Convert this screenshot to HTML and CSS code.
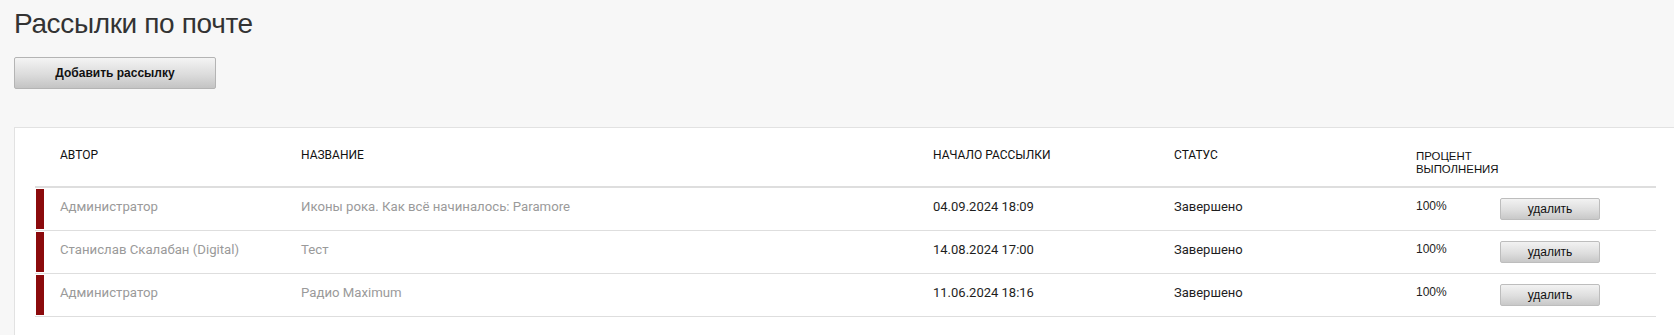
FILE: index.html
```html
<!DOCTYPE html>
<html lang="ru">
<head>
<meta charset="utf-8">
<title>Рассылки по почте</title>
<link rel="stylesheet" href="styles.css">
</head>
<body>
<div class="page">
  <h1 class="title">Рассылки по почте</h1>
  <button class="btn-add" type="button">Добавить рассылку</button>
  <div class="panel">
    <div class="table">
      <div class="thead">
        <div class="cell"></div>
        <div class="cell th">Автор</div>
        <div class="cell th">Название</div>
        <div class="cell th">Начало рассылки</div>
        <div class="cell th">Статус</div>
        <div class="cell th th-arial">Процент выполнения</div>
      </div>
      <div class="row">
        <div class="cell"><span class="bar"></span></div>
        <div class="cell muted">Администратор</div>
        <div class="cell muted">Иконы рока. Как всё начиналось: Paramore</div>
        <div class="cell dark">04.09.2024 18:09</div>
        <div class="cell dark">Завершено</div>
        <div class="cell pct">100%</div>
        <div class="cell"><button class="btn-del" type="button">удалить</button></div>
      </div>
      <div class="row">
        <div class="cell"><span class="bar"></span></div>
        <div class="cell muted">Станислав Скалабан (Digital)</div>
        <div class="cell muted">Тест</div>
        <div class="cell dark">14.08.2024 17:00</div>
        <div class="cell dark">Завершено</div>
        <div class="cell pct">100%</div>
        <div class="cell"><button class="btn-del" type="button">удалить</button></div>
      </div>
      <div class="row">
        <div class="cell"><span class="bar"></span></div>
        <div class="cell muted">Администратор</div>
        <div class="cell muted">Радио Maximum</div>
        <div class="cell dark">11.06.2024 18:16</div>
        <div class="cell dark">Завершено</div>
        <div class="cell pct">100%</div>
        <div class="cell"><button class="btn-del" type="button">удалить</button></div>
      </div>
    </div>
  </div>
</div>
</body>
</html>
```

FILE: styles.css
```css
html, body {
  margin: 0;
  padding: 0;
  background: #f7f7f7;
}

.page {
  padding-left: 14px;
  display: flex;
  flex-direction: column;
  align-items: flex-start;
}

.title {
  margin: 7px 0 0 0;
  font-family: "Liberation Sans", Arial, sans-serif;
  font-weight: normal;
  font-size: 28px;
  letter-spacing: -0.35px;
  line-height: 33px;
  color: #333;
}

.btn-add {
  margin-top: 17px;
  width: 202px;
  height: 32px;
  box-sizing: border-box;
  border: 1px solid #b4b4b4;
  border-radius: 2px;
  background: linear-gradient(to bottom, #f4f4f4 0%, #dcdcdc 55%, #c4c4c4 100%);
  font-family: "Liberation Sans", Arial, sans-serif;
  font-weight: bold;
  font-size: 12px;
  color: #111;
  padding: 0;
}

.panel {
  margin-top: 38px;
  align-self: stretch;
  background: #fff;
  border-top: 1px solid #e2e2e2;
  border-left: 1px solid #e2e2e2;
  padding: 0 18px 30px 20px;
}

.table {
  display: flex;
  flex-direction: column;
}

.thead,
.row {
  display: grid;
  grid-template-columns: 25px 241px 632px 241px 242px 84px 1fr;
  align-items: start;
}

.thead {
  height: 60px;
  box-sizing: border-box;
  padding-top: 20px;
  border-bottom: 2px solid #dedede;
}

.th {
  font-family: Roboto, "Liberation Sans", sans-serif;
  font-size: 12px;
  text-transform: uppercase;
  color: #111;
  line-height: 14px;
}

.th-arial {
  grid-column: span 2;
  max-width: 96px;
  font-family: "Liberation Sans", Arial, sans-serif;
  font-size: 11.4px;
  line-height: 12.5px;
  padding-top: 2px;
}

.row {
  height: 43px;
  box-sizing: border-box;
  border-bottom: 1px solid #dedede;
}

.row .cell {
  line-height: 15px;
}

.row .cell.muted,
.row .cell.dark,
.row .cell.pct {
  padding-top: 11px;
}

.bar {
  display: block;
  margin: 1px 0 0 1px;
  width: 8px;
  height: 40px;
  background: #8b0a0c;
}

.muted {
  font-family: Roboto, "Liberation Sans", sans-serif;
  font-size: 13.2px;
  color: #9a9a9a;
}

.dark {
  font-family: Roboto, "Liberation Sans", sans-serif;
  font-size: 13px;
  color: #1e1e1e;
}

.pct {
  font-family: "Liberation Sans", Arial, sans-serif;
  font-size: 12px;
  color: #1e1e1e;
}

.btn-del {
  display: block;
  margin-top: 10px;
  width: 100px;
  height: 22px;
  box-sizing: border-box;
  border: 1px solid #bdbdbd;
  border-radius: 2px;
  background: linear-gradient(to bottom, #f2f2f2 0%, #dedede 55%, #c8c8c8 100%);
  font-family: "Liberation Sans", Arial, sans-serif;
  font-size: 12px;
  color: #111;
  padding: 0;
}
```
